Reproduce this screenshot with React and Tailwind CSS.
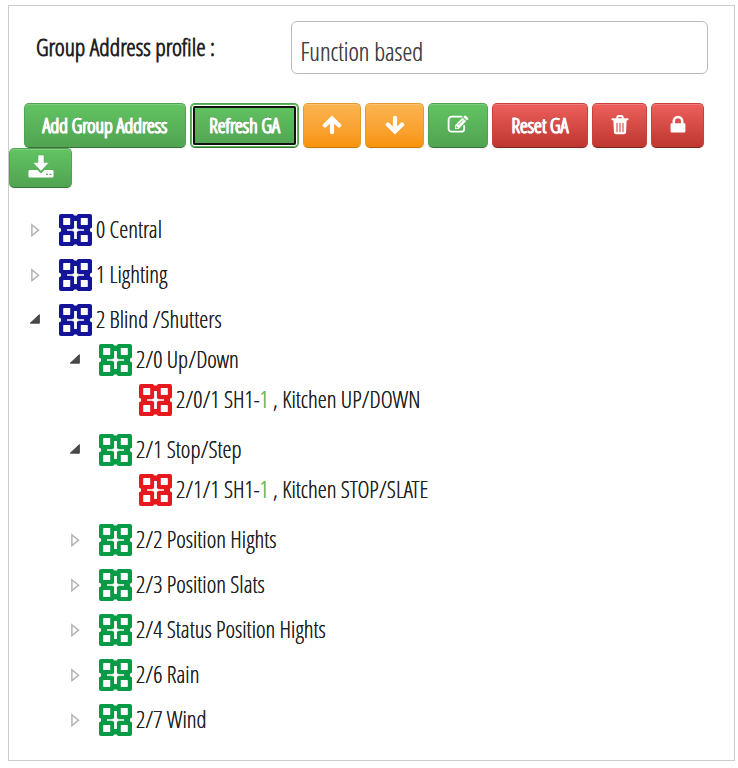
import React, { useState } from "react";

const groups = [
  { id: "0", name: "Central", children: [] },
  { id: "1", name: "Lighting", children: [] },
  {
    id: "2",
    name: "Blind /Shutters",
    open: true,
    children: [
      {
        id: "2/0",
        name: "Up/Down",
        open: true,
        children: [{ id: "2/0/1", device: "SH1-", channel: "1", name: "Kitchen UP/DOWN" }],
      },
      {
        id: "2/1",
        name: "Stop/Step",
        open: true,
        children: [{ id: "2/1/1", device: "SH1-", channel: "1", name: "Kitchen STOP/SLATE" }],
      },
      { id: "2/2", name: "Position Hights", children: [] },
      { id: "2/3", name: "Position Slats", children: [] },
      { id: "2/4", name: "Status Position Hights", children: [] },
      { id: "2/6", name: "Rain", children: [] },
      { id: "2/7", name: "Wind", children: [] },
    ],
  },
];

const levelColors = ["text-[#14149a]", "text-[#079a47]", "text-[#e6191f]"];

const buttonColors = {
  green: "border-[#51a351] border-b-[#387038] from-[#62c462] to-[#51a351]",
  orange: "border-[#e59a2f] border-b-[#c67605] from-[#fbb450] to-[#f89406]",
  red: "border-[#c9403a] border-b-[#802420] from-[#ee5f5b] to-[#bd362f]",
};

const raised = "shadow-[inset_0_1px_0_rgba(255,255,255,0.2),0_1px_2px_rgba(0,0,0,0.05)]";
const ringed =
  "shadow-[inset_0_0_0_1px_#5ab45a,inset_0_0_0_2px_#fff] outline-2 -outline-offset-5 outline-[#111]";

const Button = ({ color, active, className, children, ...props }) => (
  <button
    type="button"
    className={`flex items-center justify-center rounded-[5px] border bg-linear-to-b text-xl font-bold text-white [text-shadow:0_0_1px_#fff,0_0_0_#fff,0_-1px_0_rgba(0,0,0,0.25)] ${active ? ringed : raised} ${buttonColors[color]} ${className}`}
    {...props}
  >
    {children}
  </button>
);

const ArrowIcon = ({ down }) => (
  <svg viewBox="0 0 20 20" className={down ? "h-5 w-5 rotate-180" : "h-5 w-5"} fill="none" stroke="currentColor">
    <path d="M10 17.2V5M2.8 10.4 10 3.4l7.2 7" strokeWidth="4.2" strokeLinejoin="miter" strokeLinecap="round" />
  </svg>
);

const EditIcon = () => (
  <svg viewBox="0 0 22 20" className="h-5 w-[22px]">
    <path
      d="M14.5 2.7H4.6A3 3 0 0 0 1.6 5.7v9a3 3 0 0 0 3 3h9.6a3 3 0 0 0 3-3V12"
      fill="none"
      stroke="currentColor"
      strokeWidth="1.8"
      strokeLinecap="round"
    />
    <path d="M8 14.9V11.2L15.5 3.7l3.6 3.6-7.5 7.6zM16.3 2.9l1.2-1.2q.7-.6 1.4 0l2.2 2.2q.6.7 0 1.4l-1.2 1.2z" fill="currentColor" />
    <path d="M9.2 11.8v1.9h1.9M11.3 11l4.6-4.6" fill="none" stroke="#5ab45a" strokeWidth="0.9" />
  </svg>
);

const TrashIcon = () => (
  <svg viewBox="0 0 18 20" className="h-5 w-[18px]">
    <path
      d="M6.2 3.2V2.4Q6.2 1 7.6 1h2.8q1.4 0 1.4 1.4v.8M1.4 4.2h15.2"
      fill="none"
      stroke="currentColor"
      strokeWidth="1.9"
      strokeLinecap="round"
    />
    <path d="M2.4 5h13.2l-.5 12.2q-.2 2.1-2.2 2.1H5.1q-2 0-2.2-2.1z" fill="currentColor" />
    <path d="M6 8.2v8.6M9 8.2v8.6M12 8.2v8.6" stroke="#d34742" strokeWidth="1.1" strokeLinecap="round" />
  </svg>
);

const LockIcon = () => (
  <svg viewBox="0 0 16 18" className="h-[18px] w-4">
    <path d="M3.8 9V6.2a4.2 4.2 0 0 1 8.4 0V9" fill="none" stroke="currentColor" strokeWidth="2.5" />
    <rect x="0.6" y="8.2" width="14.8" height="9.2" rx="0.8" fill="currentColor" />
  </svg>
);

const DownloadIcon = () => (
  <svg viewBox="0 0 26 24" className="h-6 w-[26px]">
    <path
      d="M1.8 16h7.6l3.6 3.4 3.6-3.4h7.6q1.3 0 1.3 1.3v5q0 1.2-1.3 1.2H1.8q-1.3 0-1.3-1.2v-5Q.5 16 1.8 16z"
      fill="currentColor"
    />
    <path d="M10 1h6v7.6h5L13 17.2 5 8.6h5z" fill="currentColor" stroke="#57ae57" strokeWidth="0.6" />
    <path d="M18 20.4h1.8M21.6 20.4h1.8" stroke="#53a653" strokeWidth="1.4" />
  </svg>
);

const GroupIcon = ({ color }) => (
  <svg viewBox="0 0 33 32" className={`h-8 w-[33px] shrink-0 ${color}`}>
    <rect width="33" height="32" rx="2" fill="currentColor" />
    <g fill="#fff">
      <rect x="4.2" y="4" width="7" height="7" rx="0.4" />
      <rect x="21.8" y="4" width="7" height="7" rx="0.4" />
      <rect x="4.2" y="21" width="7" height="7" rx="0.4" />
      <rect x="21.8" y="21" width="7" height="7" rx="0.4" />
      <path d="M15.1 7h2.8v7.6h1.4v2.8h-1.4V25h-2.8v-7.6h-1.4v-2.8h1.4z" />
      <path d="M8 15.1h17v1.8H8z" opacity="0.85" />
      <path d="M14 0h5l-1.2 1.6h-2.6zM14 32h5l-1.2-1.6h-2.6zM0 13.6v4.8l2-1.2v-2.4zM33 13.6v4.8l-2-1.2v-2.4z" />
    </g>
  </svg>
);

const Toggle = ({ open, ...props }) => (
  <button type="button" className="flex h-5 w-5 shrink-0 items-center justify-center" {...props}>
    <svg viewBox="0 0 12 14" className="h-[14px] w-3">
      {open ? (
        <path d="M10.4 1.6v8.6H1.2z" fill="#4a4a4a" stroke="#333" strokeWidth="0.8" strokeLinejoin="round" />
      ) : (
        <path d="M2.9 1.8v10.8l6.6-5.4z" fill="none" stroke="#b4b4b4" strokeWidth="1.5" />
      )}
    </svg>
  </button>
);

const TreeNode = ({ node, level }) => {
  const [open, setOpen] = useState(!!node.open);

  return (
    <li className="pb-[5px]">
      <div className="flex h-10 items-center">
        {node.children ? (
          <Toggle
            open={open}
            aria-expanded={open}
            aria-label={`Toggle ${node.name}`}
            onClick={() => setOpen(!open)}
          />
        ) : (
          <span className="w-5 shrink-0" />
        )}
        <div className="ml-[14px] flex items-center gap-1 whitespace-nowrap">
          <GroupIcon color={levelColors[level]} />
          <span className="pb-0.5 [text-shadow:0_0_0_#222]">
            {node.id} {node.device}
            {node.channel && (
              <span className="text-[#5cb85c] [text-shadow:0_0_0_#5cb85c]">{node.channel}</span>
            )}
            {node.channel && " , "}
            {node.name}
          </span>
        </div>
      </div>
      {open && node.children?.length > 0 && (
        <ul className="ml-10">
          {node.children.map((child) => (
            <TreeNode key={child.id} node={child} level={level + 1} />
          ))}
        </ul>
      )}
    </li>
  );
};

const App = () => {
  return (
    <div className="bg-white pt-[5px] pr-[3px] pb-2 pl-2 font-['Open_Sans_Condensed_Light','Roboto_Condensed',sans-serif] text-[#222]">
      <main className="border border-[#ccc] pb-2.5">
        <div className="flex items-start pt-[15px] pr-[26px] pl-[27px]">
          <label htmlFor="profile" className="flex-1 pt-2.5 text-2xl leading-8 font-bold">
            Group Address profile :
          </label>
          <select
            id="profile"
            className="h-[53px] w-[62%] appearance-none rounded-md border border-[#bbb] bg-white px-2 pt-2 text-[25px] text-[#444] [text-shadow:0_0_0_#444]"
          >
            <option>Function based</option>
          </select>
        </div>

        <div className="mt-[29px] flex flex-wrap gap-x-1">
          <Button color="green" className="ml-[15px] h-[45px] w-[162px]">
            Add Group Address
          </Button>
          <Button color="green" active className="h-[45px] w-[109px]">
            Refresh GA
          </Button>
          <Button color="orange" className="h-[45px] w-[58px] pb-0.5" aria-label="Move up">
            <ArrowIcon />
          </Button>
          <Button color="orange" className="h-[45px] w-[59px] pb-0.5" aria-label="Move down">
            <ArrowIcon down />
          </Button>
          <Button color="green" className="h-[45px] w-[60px] pb-1" aria-label="Edit">
            <EditIcon />
          </Button>
          <Button color="red" className="h-[45px] w-24">
            Reset GA
          </Button>
          <Button color="red" className="h-[45px] w-[55px] pb-0.5" aria-label="Delete">
            <TrashIcon />
          </Button>
          <Button color="red" className="h-[45px] w-[53px] pb-1" aria-label="Lock">
            <LockIcon />
          </Button>
          <Button color="green" className="h-10 w-[63px] pb-1" aria-label="Download">
            <DownloadIcon />
          </Button>
        </div>

        <ul className="mt-[22px] ml-4 text-[23px]">
          {groups.map((group) => (
            <TreeNode key={group.id} node={group} level={0} />
          ))}
        </ul>
      </main>
    </div>
  );
};

export default App;
